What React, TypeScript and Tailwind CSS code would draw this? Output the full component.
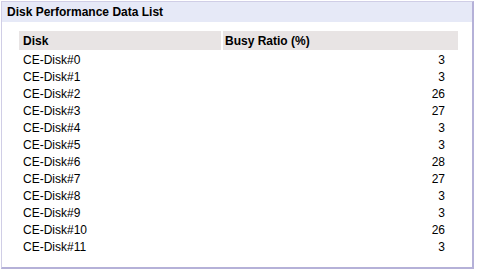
const rows: [string, number][] = [
  ["CE-Disk#0", 3],
  ["CE-Disk#1", 3],
  ["CE-Disk#2", 26],
  ["CE-Disk#3", 27],
  ["CE-Disk#4", 3],
  ["CE-Disk#5", 3],
  ["CE-Disk#6", 28],
  ["CE-Disk#7", 27],
  ["CE-Disk#8", 3],
  ["CE-Disk#9", 3],
  ["CE-Disk#10", 26],
  ["CE-Disk#11", 3],
];

export default function App() {
  return (
    <div className="w-[482px] h-[275px] bg-white pt-[1px] pl-[1px] font-['Liberation_Sans',Arial,sans-serif] text-[12px] text-black">
      <div className="w-[473px] h-[268px] border-l border-t border-[#d0cee6] border-r-2 border-b-2 border-r-[#b5b1d8] border-b-[#b5b1d8]">
        <div className="h-[20px] bg-[#e6e9f7] pl-[5px] flex items-center font-bold">
          Disk Performance Data List
        </div>
        <div className="ml-[17px] mr-[14px] mt-[9px]">
          <div className="flex h-[19px] font-bold">
            <div className="w-[202px] bg-[#e8e4e4] pl-[4px] flex items-center">Disk</div>
            <div className="flex-1 ml-[2px] bg-[#e8e4e4] pl-[2px] flex items-center">Busy Ratio (%)</div>
          </div>
          <div className="mt-[1px]">
            {rows.map(([name, v]) => (
              <div key={name} className="flex h-[17px] items-center">
                <div className="w-[202px] pl-[4px]">{name}</div>
                <div className="flex-1 text-right pr-[13px]">{v}</div>
              </div>
            ))}
          </div>
        </div>
      </div>
    </div>
  );
}
